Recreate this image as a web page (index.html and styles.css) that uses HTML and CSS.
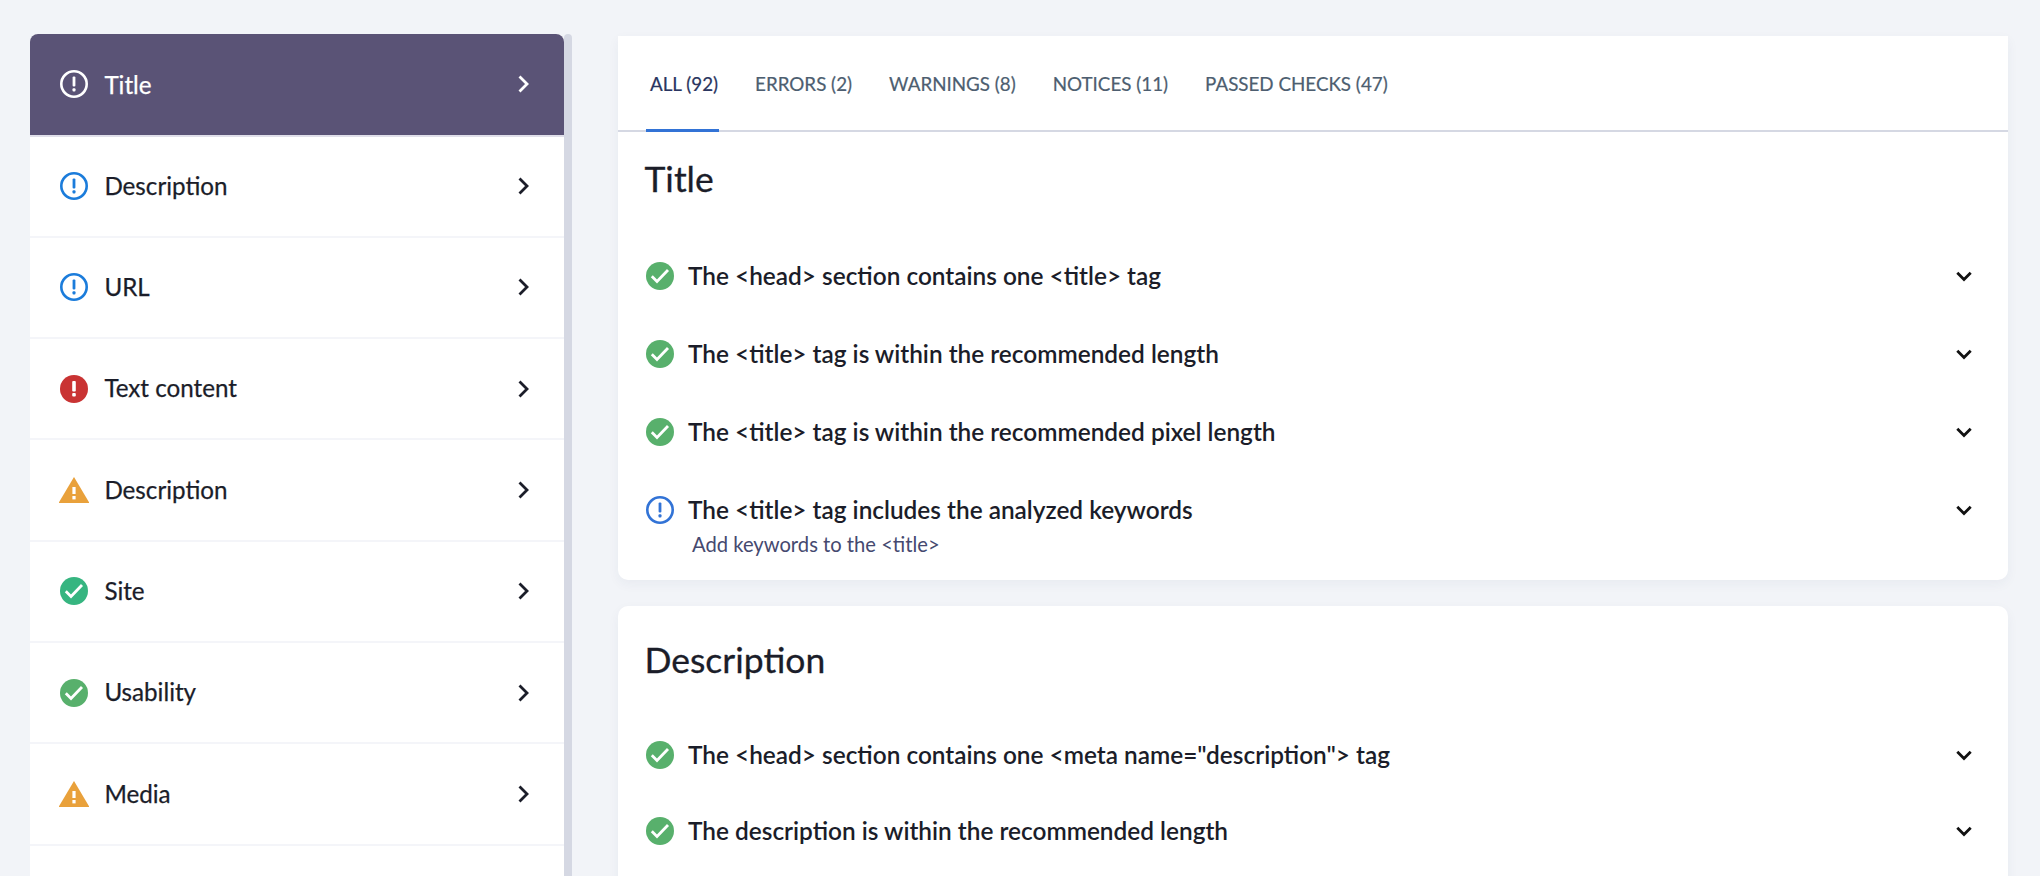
FILE: index.html
```html
<!DOCTYPE html>
<html lang="en">
<head>
<meta charset="utf-8">
<title>Audit checks</title>
<link rel="stylesheet" href="styles.css">
</head>
<body>
<svg class="defs" width="0" height="0" aria-hidden="true">
  <symbol id="i-info" viewBox="0 0 28 28"><circle cx="14" cy="14" r="12.7" fill="none" stroke="currentColor" stroke-width="2.600"/><rect x="12.600" y="6.500" width="2.800" height="10" rx="1" fill="currentColor"/><rect x="12.500" y="18.300" width="3" height="3.200" rx="1" fill="currentColor"/></symbol>
  <symbol id="i-error" viewBox="0 0 28 28"><circle cx="14" cy="14" r="14" fill="currentColor"/><rect x="12.200" y="6" width="3.600" height="10.500" rx="1" fill="#fff"/><rect x="12.200" y="18" width="3.600" height="3.600" rx="1" fill="#fff"/></symbol>
  <symbol id="i-warn" viewBox="0 0 30 26"><path d="M15 0 30.500 26H-.5Z" fill="currentColor"/><rect x="13.400" y="10" width="3.200" height="7" fill="#fff"/><rect x="13.400" y="19" width="3.200" height="3.400" fill="#fff"/></symbol>
  <symbol id="i-ok" viewBox="0 0 28 28"><circle cx="14" cy="14" r="14" fill="currentColor"/><path d="M5.800 14.300 11 19.500 22 8" fill="none" stroke="#fff" stroke-width="2.800"/></symbol>
  <symbol id="i-right" viewBox="0 0 11 18"><path d="M1.500 1.500 9 9l-7.500 7.500" fill="none" stroke="currentColor" stroke-width="2.800"/></symbol>
  <symbol id="i-down" viewBox="0 0 16 11"><path d="M1.300 1.800 8 8.500l6.700-6.700" fill="none" stroke="currentColor" stroke-width="2.800"/></symbol>
</svg>
<div class="page">
  <div class="side-wrap">
    <nav class="side">
      <a class="side-row active"><svg class="ic ic-white"><use href="#i-info"/></svg><span class="side-label">Title</span><svg class="chev"><use href="#i-right"/></svg></a>
      <a class="side-row"><svg class="ic ic-blue"><use href="#i-info"/></svg><span class="side-label">Description</span><svg class="chev"><use href="#i-right"/></svg></a>
      <a class="side-row"><svg class="ic ic-blue"><use href="#i-info"/></svg><span class="side-label">URL</span><svg class="chev"><use href="#i-right"/></svg></a>
      <a class="side-row"><svg class="ic ic-red"><use href="#i-error"/></svg><span class="side-label">Text content</span><svg class="chev"><use href="#i-right"/></svg></a>
      <a class="side-row"><svg class="ic-warn ic-orange"><use href="#i-warn"/></svg><span class="side-label">Description</span><svg class="chev"><use href="#i-right"/></svg></a>
      <a class="side-row"><svg class="ic ic-teal"><use href="#i-ok"/></svg><span class="side-label">Site</span><svg class="chev"><use href="#i-right"/></svg></a>
      <a class="side-row"><svg class="ic ic-green"><use href="#i-ok"/></svg><span class="side-label">Usability</span><svg class="chev"><use href="#i-right"/></svg></a>
      <a class="side-row"><svg class="ic-warn ic-orange"><use href="#i-warn"/></svg><span class="side-label">Media</span><svg class="chev"><use href="#i-right"/></svg></a>
      <a class="side-row"></a>
    </nav>
    <div class="scrollbar"></div>
  </div>
  <main class="content">
    <section class="card card-first">
      <div class="tabs">
        <a class="tab active">ALL (92)</a>
        <a class="tab">ERRORS (2)</a>
        <a class="tab">WARNINGS (8)</a>
        <a class="tab">NOTICES (11)</a>
        <a class="tab">PASSED CHECKS (47)</a>
      </div>
      <div class="card-body body-title">
        <h2 class="card-title">Title</h2>
        <div class="check"><svg class="ic ic-green"><use href="#i-ok"/></svg><span class="check-label">The &lt;head&gt; section contains one &lt;title&gt; tag</span><svg class="down"><use href="#i-down"/></svg></div>
        <div class="check"><svg class="ic ic-green"><use href="#i-ok"/></svg><span class="check-label">The &lt;title&gt; tag is within the recommended length</span><svg class="down"><use href="#i-down"/></svg></div>
        <div class="check"><svg class="ic ic-green"><use href="#i-ok"/></svg><span class="check-label">The &lt;title&gt; tag is within the recommended pixel length</span><svg class="down"><use href="#i-down"/></svg></div>
        <div class="check"><svg class="ic ic-info"><use href="#i-info"/></svg><span class="check-label">The &lt;title&gt; tag includes the analyzed keywords</span><svg class="down"><use href="#i-down"/></svg></div>
        <p class="hint">Add keywords to the &lt;title&gt;</p>
      </div>
    </section>
    <section class="card card-last">
      <div class="card-body body-desc">
        <h2 class="card-title title-desc">Description</h2>
        <div class="check check-tight"><svg class="ic ic-green"><use href="#i-ok"/></svg><span class="check-label">The &lt;head&gt; section contains one &lt;meta name="description"&gt; tag</span><svg class="down"><use href="#i-down"/></svg></div>
        <div class="check check-tight"><svg class="ic ic-green"><use href="#i-ok"/></svg><span class="check-label">The description is within the recommended length</span><svg class="down"><use href="#i-down"/></svg></div>
      </div>
    </section>
  </main>
</div>
</body>
</html>
```

FILE: styles.css
```css
* { box-sizing: border-box; }
html, body { margin: 0; height: 100%; overflow: hidden; }
body { background: #f2f4f8; font-family: "Lato", sans-serif; color: #1b1d29; }
.defs { position: absolute; }
.page { display: flex; align-items: flex-start; padding: 34px 32px 0 30px; height: 876px; overflow: hidden; }

.side-wrap { display: flex; flex: none; width: 542px; }
.side { width: 534px; background: #fff; border-radius: 8px 8px 0 0; overflow: hidden; }
.scrollbar { width: 8px; height: 900px; background: #d5d8e3; border-radius: 4px 4px 0 0; }
.side-row { display: flex; align-items: center; height: 101.33px; padding: 0 35px 0 29.700px; border-bottom: 2px solid #f4f5f9; font-size: 24.200px; -webkit-text-stroke: .25px currentColor; color: #1b1d29; }
.side-row:first-child { height: 102.500px; }
.side-row.active { background: #5a5376; color: #fff; border-bottom-color: #e0dfea; }
.side-label { flex: 1; margin: 0 0 2px 16.700px; }
.side-row.active .side-label { margin-bottom: 0; }

.ic { width: 28px; height: 28px; flex: none; }
.ic-warn { width: 30px; height: 26px; flex: none; margin: 0 -1px; overflow: visible; }
.ic-white { color: #fff; }
.ic-blue { color: #1b7cdb; }
.ic-info { color: #3273d6; }
.ic-red { color: #c93333; }
.ic-orange { color: #e9a13b; }
.ic-teal { color: #36b580; }
.ic-green { color: #58b06c; }
.chev { width: 11px; height: 18px; flex: none; }
.down { width: 16px; height: 11px; flex: none; color: #111; }

.content { margin-left: 46px; flex: 1; min-width: 0; padding-top: 2px; }
.card { background: #fff; border-radius: 10px; box-shadow: 0 4px 12px rgba(40, 50, 90, .05); margin-bottom: 26px; }
.card-first { border-radius: 0 0 10px 10px; height: 544px; }
.card-last { height: 400px; }
.tabs { display: flex; gap: 37px; height: 96px; padding: 0 32px; border-bottom: 2px solid #d5d8e3; }
.tab { position: relative; display: flex; align-items: center; height: 96px; padding-bottom: 1px; font-size: 18.800px; -webkit-text-stroke: .2px currentColor; color: #4d5e70; }
.tab.active { color: #2a3560; }
.tab.active::after { content: ""; position: absolute; left: -4px; right: -1px; bottom: 0; height: 3px; background: #3273d6; }

.card-body { padding: 0 28px 0 26.500px; }
.body-title { padding-top: 25px; }
.body-desc { padding-top: 32px; }
.card-title { margin: 0 0 36px; font-size: 35.500px; line-height: 44px; font-weight: 400; -webkit-text-stroke: .3px currentColor; color: #1b1d29; }
.title-desc { margin-bottom: 35px; }
.check { display: flex; align-items: center; height: 78px; padding: 0 8px 0 1.500px; font-size: 24.400px; font-weight: 600; }
.check-tight { height: 76px; }
.check-label { flex: 1; margin: 0 0 2px 14px; }
.hint { margin: -18px 0 0 47.500px; font-size: 20.200px; line-height: 26px; color: #45496f; }
```
